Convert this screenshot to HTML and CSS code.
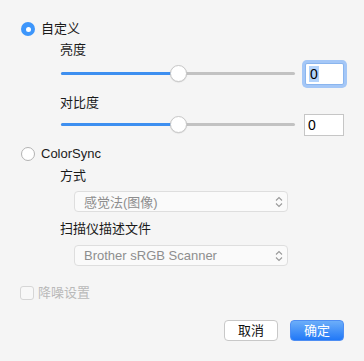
FILE: index.html
```html
<!DOCTYPE html>
<html>
<head>
<meta charset="utf-8">
<link rel="stylesheet" href="styles.css">
</head>
<body>
<div class="panel">
  <div class="radio-row">
    <span class="radio on"></span>
    <span class="label">自定义</span>
  </div>
  <div class="group">
    <div class="label sub lbl-bright">亮度</div>
    <div class="slider-row">
      <div class="track">
        <div class="fill" style="width:50%"></div>
        <div class="thumb" style="left:50%"></div>
      </div>
      <div class="field focused"><span class="sel">0</span></div>
    </div>
    <div class="label sub lbl-contrast">对比度</div>
    <div class="slider-row row2">
      <div class="track">
        <div class="fill" style="width:50%"></div>
        <div class="thumb" style="left:50%"></div>
      </div>
      <div class="field"><span>0</span></div>
    </div>
  </div>
  <div class="radio-row cs">
    <span class="radio"></span>
    <span class="label">ColorSync</span>
  </div>
  <div class="group">
    <div class="label sub lbl-method">方式</div>
    <div class="select">
      <span>感觉法(图像)</span>
      <svg class="arrows" width="8" height="12" viewBox="0 0 8 12"><path d="M1 4.5 L4 1.5 L7 4.5 M1 7.5 L4 10.5 L7 7.5" fill="none" stroke="#9a9a9a" stroke-width="1.1"/></svg>
    </div>
    <div class="label sub lbl-profile">扫描仪描述文件</div>
    <div class="select">
      <span>Brother sRGB Scanner</span>
      <svg class="arrows" width="8" height="12" viewBox="0 0 8 12"><path d="M1 4.5 L4 1.5 L7 4.5 M1 7.5 L4 10.5 L7 7.5" fill="none" stroke="#9a9a9a" stroke-width="1.1"/></svg>
    </div>
  </div>
  <div class="check-row">
    <span class="check"></span>
    <span class="label dim">降噪设置</span>
  </div>
  <div class="buttons">
    <button class="btn">取消</button>
    <button class="btn primary">确定</button>
  </div>
</div>
</body>
</html>
```
FILE: styles.css
```css
html, body {
  margin: 0;
  padding: 0;
  background: #f5f5f5;
  width: 364px;
  height: 361px;
  overflow: hidden;
}
body {
  font-family: "Liberation Sans", "Noto Sans CJK SC", sans-serif;
  font-size: 13px;
  color: #1a1a1a;
}
.panel {
  padding: 21px 20px 0 21px;
  display: flex;
  flex-direction: column;
}
.label {
  line-height: 16px;
  height: 16px;
  white-space: nowrap;
}
.radio-row {
  display: flex;
  align-items: center;
  height: 16px;
  gap: 6px;
}
.radio {
  width: 14px;
  height: 14px;
  border-radius: 50%;
  box-sizing: border-box;
  border: 1px solid #b3b3b3;
  background: #fff;
  flex: none;
  display: flex;
  align-items: center;
  justify-content: center;
}
.radio.on {
  border: none;
  background: #3d96fb;
}
.radio.on::after {
  content: "";
  width: 5px;
  height: 5px;
  border-radius: 50%;
  background: #fff;
}
.group {
  display: flex;
  flex-direction: column;
  padding-left: 39px;
}
.lbl-bright { margin-top: 5px; }
.lbl-contrast { margin-top: 10px; }
.lbl-method { margin-top: 6px; }
.lbl-profile { margin-top: 9px; }
.slider-row {
  display: flex;
  align-items: center;
  height: 22px;
  margin-top: 5px;
}
.slider-row.row2 { margin-top: 3px; }
.track {
  position: relative;
  margin-left: 1px;
  width: 234px;
  height: 3px;
  margin-top: -2px;
  background: #c2c2c2;
  border-radius: 2px;
}
.fill {
  height: 3px;
  background: #3d8ff0;
  border-radius: 2px 0 0 2px;
}
.thumb {
  position: absolute;
  top: 50%;
  width: 17px;
  height: 17px;
  box-sizing: border-box;
  margin-left: -8px;
  margin-top: -8.5px;
  border-radius: 50%;
  background: #fff;
  border: 1px solid #c9c9c9;
  box-shadow: 0 0.5px 1px rgba(0,0,0,0.15);
}
.field {
  margin-left: 9px;
  width: 40px;
  height: 22px;
  box-sizing: border-box;
  border: 1px solid #c6c6c6;
  background: #fff;
  display: flex;
  align-items: center;
  padding-left: 3px;
  font-size: 14px;
  color: #000;
}
.field.focused {
  border-color: #8ab5ee;
  border-radius: 2px;
  box-shadow: 0 0 0 3px #a4c7f7;
  width: 39px;
  margin-left: 10px;
}
.sel {
  background: #b3d3fb;
  padding: 0 1px;
  line-height: 16px;
}
.cs { margin-top: 10px; }
.select {
  margin-left: 14px;
  margin-top: 7px;
  width: 214px;
  height: 21px;
  box-sizing: border-box;
  border: 1px solid #dedede;
  border-radius: 4px;
  background: #fafafa;
  display: flex;
  align-items: center;
  justify-content: space-between;
  padding: 0 4px 0 9px;
  color: #8e8e8e;
}
.group .select + .label { }
.select + .lbl-profile + .select { margin-top: 8px; }
.check-row {
  display: flex;
  align-items: center;
  height: 16px;
  gap: 4px;
  margin-top: 19px;
  margin-left: -1px;
}
.check {
  width: 14px;
  height: 14px;
  box-sizing: border-box;
  border: 1px solid #d6d6d6;
  border-radius: 3px;
  background: #f8f8f8;
}
.dim { color: #b9b9b9; }
.buttons {
  display: flex;
  justify-content: flex-end;
  gap: 12px;
  margin-top: 19px;
}
.btn {
  font-family: inherit;
  font-size: 13px;
  width: 54px;
  height: 21px;
  padding: 0;
  box-sizing: border-box;
  border: 1px solid #c8c8c8;
  border-radius: 4px;
  background: #fff;
  color: #111;
  line-height: 19px;
}
.btn.primary {
  border: 1px solid #4e8ef3;
  background: linear-gradient(#6caef9, #2178f7);
  color: #fff;
}
```
